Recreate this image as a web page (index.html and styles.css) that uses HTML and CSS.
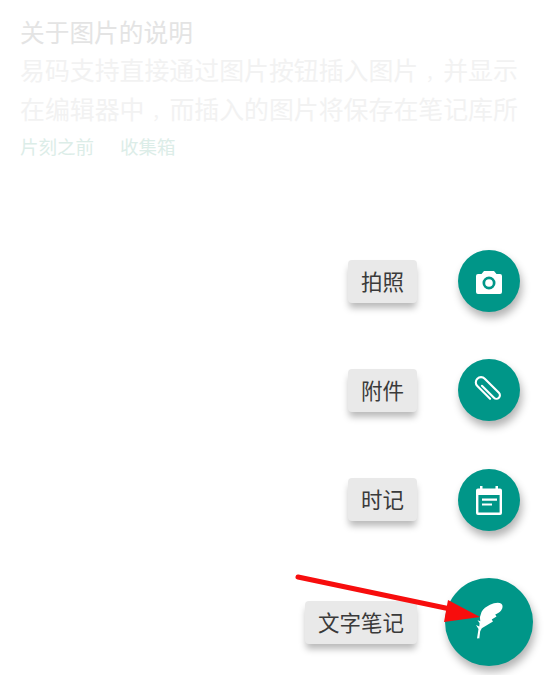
FILE: index.html
```html
<!DOCTYPE html>
<html lang="zh">
<head>
<meta charset="utf-8">
<title>笔记</title>
<link rel="stylesheet" href="styles.css">
</head>
<body>
<main class="page">
  <section class="note">
    <h1 class="note-title">关于图片的说明</h1>
    <p class="note-body">易码支持直接通过图片按钮插入图片<span class="punct">，</span>并显示<br>在编辑器中<span class="punct">，</span>而插入的图片将保存在笔记库所</p>
    <div class="note-tags"><span>片刻之前</span><span>收集箱</span></div>
  </section>
  <section class="fab-menu">
    <div class="fab-row">
      <span class="fab-label">拍照</span>
      <button class="fab">
        <svg class="icon" viewBox="0 0 40 40"><path d="M15 10 12.500 13H9a2 2 0 0 0-2 2v16a2 2 0 0 0 2 2h22a2 2 0 0 0 2-2V15a2 2 0 0 0-2-2h-3.500L25 10H15zm5 5.500a6.500 6.500 0 1 1 0 13 6.500 6.500 0 0 1 0-13z" fill="#fff" fill-rule="evenodd"/><circle cx="20" cy="22" r="3.800" fill="#fff"/></svg>
      </button>
    </div>
    <div class="fab-row">
      <span class="fab-label">附件</span>
      <button class="fab">
        <svg class="icon" viewBox="0 0 40 40"><path transform="rotate(-45 20 20)" d="M18 12v17a3.500 3.500 0 0 0 7 0V9a5.250 5.250 0 0 0-10.500 0v18" fill="none" stroke="#fff" stroke-width="2.100" stroke-linecap="round"/></svg>
      </button>
    </div>
    <div class="fab-row">
      <span class="fab-label">时记</span>
      <button class="fab">
        <svg class="icon" viewBox="0 0 40 40"><path d="M11 6h2.500v2.500h13V6H29v2.500h2a2 2 0 0 1 2 2V33a2 2 0 0 1-2 2H9a2 2 0 0 1-2-2V10.500a2 2 0 0 1 2-2h2V6zM9.400 15v17.600h21.200V15H9.400zm3.600 3.600h15v2.200H13v-2.200zm0 4.800h10v2.200H13v-2.200z" fill="#fff" fill-rule="evenodd"/></svg>
      </button>
    </div>
    <div class="fab-row">
      <span class="fab-label">文字笔记</span>
      <button class="fab fab-main">
        <svg class="icon-main" viewBox="-1 2 50 50"><path d="M12 43.500 13.500 34l-2.500-4 3.300 1.500.3-3.500-2.100-2.800 2.800 1-.4-4 1.600-5.200C18 14 21.500 11.500 25 9.800c3.700-1.800 8.500-2.800 11-1.300 2.400 1.500 2 5.300-.8 8-1.500 1.400-3.500 2.300-5 2.900l1.300 2-4.800 3 1.300 2-5.400 3.300-5.800 3.500-1.600 3-.9 7.200-2.300-.4z" fill="#fff"/></svg>
      </button>
    </div>
  </section>
  <svg class="annotation" viewBox="0 0 552 675"><line x1="298" y1="577" x2="455" y2="610" stroke="#f70d0d" stroke-width="5" stroke-linecap="round"/><polygon points="448,600 480,617 444,622" fill="#f70d0d"/></svg>
</main>
</body>
</html>
```
FILE: styles.css
```css
* { box-sizing: border-box; }
html, body { margin: 0; height: 100%; background: #fff; }
body { font-family: "Noto Sans CJK SC", "Noto Sans", sans-serif; overflow: hidden; }
.page { position: relative; width: 552px; height: 675px; padding: 12px 0 0 20px; }
.note { height: 238px; }
.note-title { margin: 0; font-size: 24.700px; line-height: 38px; font-weight: 400; color: #e4e4e4; }
.note-body { margin: 0; font-size: 24.900px; line-height: 39px; color: #f2f2f2; white-space: nowrap; }
.punct { font-size: 17.430px; line-height: 1; padding-left: 7.470px; }
.note-tags { display: flex; gap: 26px; margin-top: 3px; font-size: 18.500px; line-height: 30px; color: #dcede8; }
.fab-menu { display: flex; flex-direction: column; gap: 47.400px; padding-right: 19px; }
.fab-row { display: flex; align-items: center; justify-content: flex-end; }
.fab-label { display: flex; align-items: center; justify-content: center; height: 43px; padding: 0 13px 2px; margin-right: 41px; font-size: 21.500px; color: #3a3a3a; background: #e9e9e9; border-radius: 4px; box-shadow: 0 6px 7px -1px rgba(0,0,0,.28); white-space: nowrap; }
.fab { display: flex; align-items: center; justify-content: center; width: 62px; height: 62px; padding: 0; margin-right: 13px; border: 0; border-radius: 50%; background: #009688; box-shadow: 2px 6px 8px rgba(0,0,0,.3); }
.fab-main { width: 88px; height: 88px; margin-right: 0; }
.fab-row:last-child .fab-label { margin-right: 28px; }
.icon { width: 40px; height: 40px; }
.icon-main { width: 50px; height: 50px; }
.annotation { position: absolute; left: 0; top: 0; width: 552px; height: 675px; pointer-events: none; }
```
